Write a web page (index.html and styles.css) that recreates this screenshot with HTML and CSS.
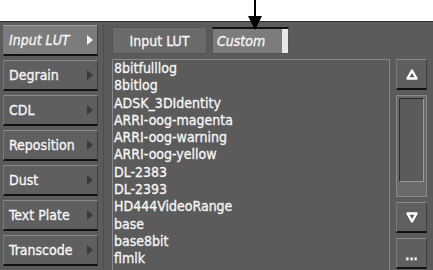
FILE: index.html
```html
<!DOCTYPE html>
<html lang="en">
<head>
  <meta charset="UTF-8">
  <title>Input LUT</title>
  <link rel="stylesheet" href="styles.css">
</head>
<body>

  <div class="top">
    <svg class="pointer" width="14" height="31" viewBox="0 0 14 31">
      <line x1="7" y1="0" x2="7" y2="20" stroke="#000" stroke-width="2"/>
      <polygon points="0,16 14,16 7,30" fill="#000"/>
    </svg>
  </div>

  <div class="panel">
    <div class="menu">
      <div class="menu-btn active">Input LUT<span class="tri"></span></div>
      <div class="menu-btn">Degrain<span class="tri"></span></div>
      <div class="menu-btn">CDL<span class="tri"></span></div>
      <div class="menu-btn">Reposition<span class="tri"></span></div>
      <div class="menu-btn">Dust<span class="tri"></span></div>
      <div class="menu-btn">Text Plate<span class="tri"></span></div>
      <div class="menu-btn">Transcode<span class="tri"></span></div>
    </div>

    <div class="sep"></div>

    <div class="main">
      <div class="tabs">
        <div class="tab">Input LUT</div>
        <div class="tab custom">Custom<span class="knob"></span></div>
      </div>
      <div class="body">
        <ul class="list">
          <li>8bitfulllog</li>
          <li>8bitlog</li>
          <li>ADSK_3DIdentity</li>
          <li>ARRI-oog-magenta</li>
          <li>ARRI-oog-warning</li>
          <li>ARRI-oog-yellow</li>
          <li>DL-2383</li>
          <li>DL-2393</li>
          <li>HD444VideoRange</li>
          <li>base</li>
          <li>base8bit</li>
          <li>flmlk</li>
        </ul>
        <div class="scroll">
          <div class="sbtn">
            <svg width="12" height="11" viewBox="0 0 12 11">
              <polygon points="6,1.5 10.5,9.5 1.5,9.5" fill="none" stroke="#fff" stroke-width="2.4" stroke-linejoin="round"/>
            </svg>
          </div>
          <div class="track"><div class="thumb"></div></div>
          <div class="sbtn">
            <svg width="12" height="11" viewBox="0 0 12 11">
              <polygon points="1.5,1.5 10.5,1.5 6,9.5" fill="none" stroke="#fff" stroke-width="2.4" stroke-linejoin="round"/>
            </svg>
          </div>
          <div class="sbtn dots">...</div>
        </div>
      </div>
    </div>
  </div>

</body>
</html>
```

FILE: styles.css
```css
body {
  margin: 0;
  width: 433px;
  height: 270px;
  overflow: hidden;
  background: #ffffff;
  font-family: "DejaVu Sans Condensed", "DejaVu Sans", sans-serif;
  font-size: 14px;
  color: #f6f6f6;
  -webkit-text-stroke: 0.3px #f6f6f6;
}

.top {
  height: 21px;
  position: relative;
}

.pointer {
  position: absolute;
  left: 248px;
  top: 0;
  z-index: 2;
}

.panel {
  height: 249px;
  background: #5b5b5b;
  border-top: 1px solid #2c2c2c;
  display: flex;
  box-sizing: border-box;
  padding: 3px 0 0 3px;
}

.menu {
  width: 95px;
  display: flex;
  flex-direction: column;
  gap: 4px;
}

.menu-btn {
  height: 28px;
  background: #5f5f5f;
  border-top: 1px solid #8a8a8a;
  border-left: 1px solid #7a7a7a;
  border-right: 1px solid #3e3e3e;
  border-bottom: 2px solid #111;
  display: flex;
  align-items: center;
  padding-left: 5px;
  position: relative;
}

.menu-btn.active {
  background: #7c7c7c;
  border-top-color: #a0a0a0;
  font-style: italic;
}

.tri {
  position: absolute;
  right: 4px;
  top: 9px;
  border-left: 6px solid #3a3a3a;
  border-top: 5px solid transparent;
  border-bottom: 5px solid transparent;
}

.active .tri {
  border-left-color: #f2f2f2;
}

.sep {
  width: 1px;
  margin: 0 6px 0 5px;
  background: #4e4e4e;
}

.main {
  flex: 1;
  display: flex;
  flex-direction: column;
}

.tabs {
  display: flex;
  gap: 5px;
  height: 27px;
  margin: 2px 0 0 2px;
}

.tab {
  width: 95px;
  background: #6a6a6a;
  border: 1px solid #555;
  display: flex;
  align-items: center;
  justify-content: center;
  box-sizing: border-box;
}

.tab.custom {
  width: 77px;
  background: #7c7c7c;
  border-top: 2px solid #111;
  font-style: italic;
  justify-content: flex-start;
  padding-left: 4px;
  position: relative;
}

.knob {
  position: absolute;
  right: 0;
  top: 0;
  bottom: 0;
  width: 6px;
  background: #e8e8e8;
}

.body {
  display: flex;
  margin-top: 5px;
  flex: 1;
}

.list {
  list-style: none;
  margin: 0 0 0 2px;
  padding: 0 0 0 1px;
  width: 275px;
  height: 210px;
  border: 1px solid #8a8a8a;
  border-bottom: none;
  line-height: 17.3px;
  overflow: hidden;
}

.scroll {
  margin-left: 6px;
  width: 31px;
  display: flex;
  flex-direction: column;
  gap: 5px;
}

.sbtn {
  height: 28px;
  background: #5f5f5f;
  border-top: 1px solid #8a8a8a;
  border-left: 1px solid #7a7a7a;
  border-right: 1px solid #3e3e3e;
  border-bottom: 2px solid #111;
  display: flex;
  align-items: center;
  justify-content: center;
  font-size: 12px;
  font-weight: bold;
}

.dots {
  align-items: flex-end;
  padding-bottom: 4px;
  box-sizing: border-box;
  height: 31px;
}

.track {
  height: 102px;
  border: 1px solid #8a8a8a;
  background: #6a6a6a;
  padding: 2px;
  box-sizing: border-box;
}

.thumb {
  height: 82px;
  background: #5b5b5b;
  border: 1px solid #2a2a2a;
  border-right-color: #9a9a9a;
  border-bottom-color: #9a9a9a;
}
```
